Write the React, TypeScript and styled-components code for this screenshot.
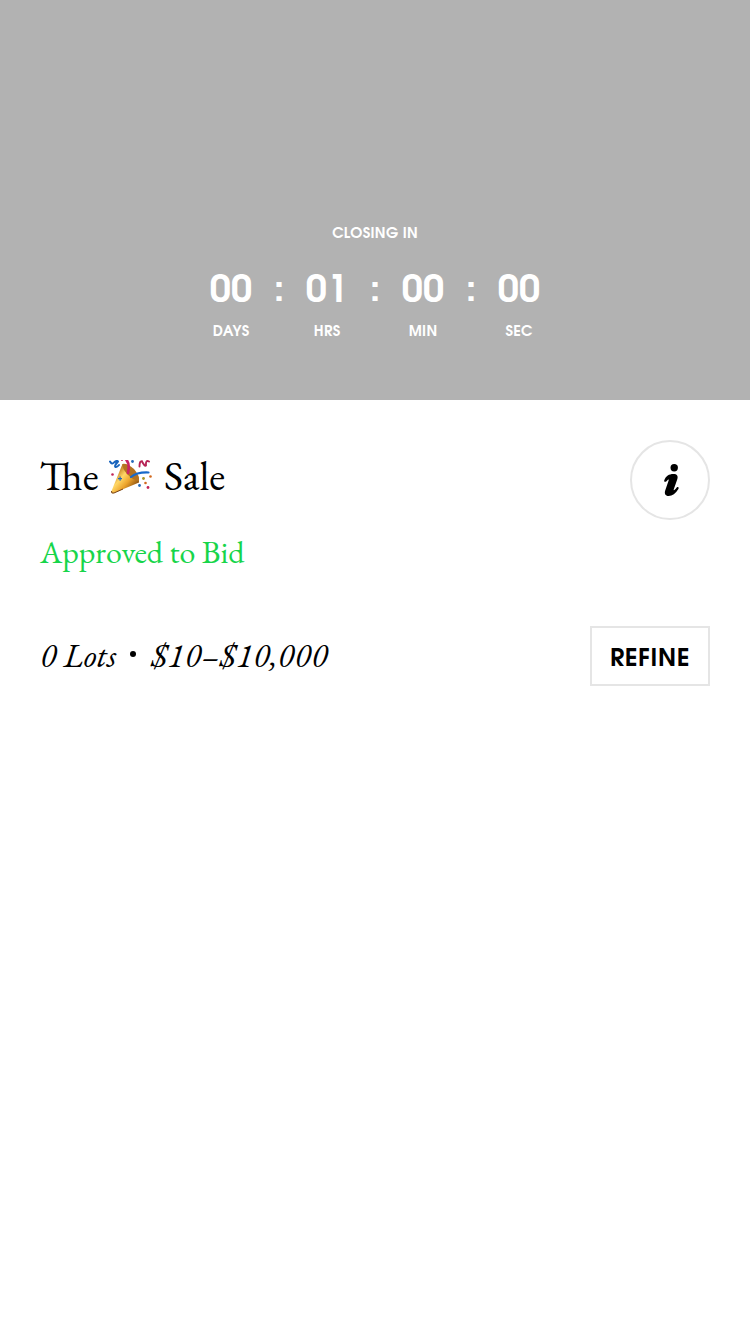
import React from "react";
import styled, { createGlobalStyle } from "styled-components";

const GlobalStyle = createGlobalStyle`
  body { margin: 0; background: #fff; }
  * { box-sizing: border-box; }
`;

const serif = `"EB Garamond", "Liberation Serif", serif`;
const sans = `"ITC Avant Garde Gothic", "URW Gothic", "TeX Gyre Adventor", Jost, "League Spartan", Lato, sans-serif`;

const Page = styled.main`
  width: 750px;
  min-height: 1334px;
  background: #fff;
  color: #000;
`;

const Hero = styled.header`
  height: 400px;
  padding-top: 224px;
  background: #b2b2b2;
  color: #fff;
  display: flex;
  flex-direction: column;
  align-items: center;
`;

const Caption = styled.div<{ $spacing?: number }>`
  font: 700 14.5px/20px ${sans};
  letter-spacing: ${(p) => p.$spacing ?? 0}px;
  margin-right: ${(p) => -(p.$spacing ?? 0)}px;
  white-space: nowrap;
`;

const Timer = styled.div`
  display: flex;
  margin-top: 25px;
`;

const Unit = styled.div`
  width: 48px;
  display: flex;
  flex-direction: column;
  align-items: center;
  gap: 7px;
`;

const Digits = styled.div`
  font: 700 38px/46px ${sans};
`;

const Colon = styled.div`
  width: 48px;
  text-align: center;
  font: 700 38px/44px ${sans};
`;

const Details = styled.section`
  padding: 40px 40px 0;
`;

const Row = styled.div`
  display: flex;
  justify-content: space-between;
`;

const Title = styled.h1`
  margin: 12px 0 0 -0.5px;
  height: 48px;
  display: flex;
  font: 400 41px/48px ${serif};
  font-variant-ligatures: common-ligatures discretionary-ligatures;
`;

const Word = styled.span<{ $width: number; $spacing?: number }>`
  width: ${(p) => p.$width}px;
  letter-spacing: ${(p) => (p.$spacing ? `${p.$spacing}px` : "normal")};
  white-space: nowrap;
`;

const Popper = styled.svg`
  width: 44px;
  height: 36px;
  margin: 8px 11px 0 0.5px;
`;

const InfoButton = styled.button`
  width: 80px;
  height: 80px;
  padding: 0;
  border: 2px solid #e5e5e5;
  border-radius: 50%;
  background: #fff;
  display: flex;
  align-items: center;
  justify-content: center;
`;

const Status = styled.p`
  margin: 13px 0 0;
  font: 400 32px/38px ${serif};
  color: #17d54a;
`;

const Summary = styled.div`
  display: flex;
  align-items: center;
  padding-bottom: 2px;
  font: italic 400 34px/58px ${serif};
`;

const Dot = styled.span`
  width: 6px;
  height: 6px;
  border-radius: 50%;
  background: #000;
  margin: 0 15px 2px 0;
`;

const FilterRow = styled(Row)`
  margin-top: 55px;
`;

const RefineButton = styled.button`
  width: 120px;
  height: 60px;
  padding: 8px 0 0;
  border: 2px solid #e5e5e5;
  background: #fff;
  color: #000;
  font: 700 24.5px/30px ${sans};
  letter-spacing: 0.6px;
`;

const units = [
  { value: "00", label: "DAYS", spacing: 0.4 },
  { value: "01", label: "HRS", spacing: 0.3 },
  { value: "00", label: "MIN", spacing: 0.3 },
  { value: "00", label: "SEC", spacing: 0.2 },
];

function PartyPopper() {
  return (
    <Popper viewBox="0 0 44 36" aria-label="Party popper">
      <defs>
        <linearGradient id="cone" x1="0.1" y1="0.3" x2="0.75" y2="0.9">
          <stop offset="0" stopColor="#b8701a" />
          <stop offset="0.35" stopColor="#ffd766" />
          <stop offset="0.65" stopColor="#eda42c" />
          <stop offset="1" stopColor="#8f5311" />
        </linearGradient>
      </defs>
      <path d="M13.500 4 L2.500 31 Q2 34 5 33 L30 22.500 Q30.500 16 25 10 Q18 3 13.500 4Z" fill="url(#cone)" />
      <path d="M13.500 4 Q13 8 18 14 Q25 21 30 21 Q31 16 25 9 Q18 3 13.500 4Z" fill="#b37322" />
      <path d="M2.500 31 Q2 34 5 33 L14 29" fill="none" stroke="#784316" strokeWidth="1" />
      <g fill="none" strokeLinecap="round" strokeLinejoin="round">
        <path d="M1 1.500 Q3 5 5 2.500 Q8 0 9 1.500 Q5 6 6.500 7 Q8 7.500 10 5" stroke="#1964bd" strokeWidth="2" />
        <path d="M17.500 0 Q21 4 19 13" stroke="#cb2464" strokeWidth="2.700" />
        <path d="M22 17 Q28 12 39.500 12.500" stroke="#1769ca" strokeWidth="2.200" />
        <path d="M30.500 6.500 Q30.500 0.500 33 1.500 Q36 7 37 5.500 Q36.500 -0.500 40 1.500" stroke="#b62254" strokeWidth="1.900" />
      </g>
      <g fill="#c32557">
        <circle cx="3.500" cy="14.500" r="1.300" />
        <circle cx="13" cy="0" r="1" />
        <circle cx="39" cy="27.500" r="1.400" />
        <circle cx="33" cy="-0.500" r="1" />
      </g>
      <g fill="#d2691e">
        <circle cx="41.500" cy="16.500" r="1.300" />
        <circle cx="36.500" cy="23" r="1.300" />
      </g>
      <circle cx="34.500" cy="18.500" r="1.400" fill="#a69425" />
      <g fill="#2569b8">
        <circle cx="23.500" cy="1.500" r="1.400" />
        <circle cx="30.500" cy="25.500" r="1.400" />
        <path d="M9 18h1.500v-1.500h1.200V18H13v1.200h-1.300v1.500h-1.200v-1.500H9z" />
      </g>
    </Popper>
  );
}

export default function App() {
  return (
    <Page>
      <GlobalStyle />
      <Hero>
        <Caption $spacing={0.3}>CLOSING IN</Caption>
        <Timer>
          {units.map((unit, i) => (
            <React.Fragment key={unit.label}>
              {i > 0 && <Colon>:</Colon>}
              <Unit>
                <Digits>{unit.value}</Digits>
                <Caption $spacing={unit.spacing}>{unit.label}</Caption>
              </Unit>
            </React.Fragment>
          ))}
        </Timer>
      </Hero>
      <Details>
        <Row>
          <Title>
            <Word $width={69}>The</Word>
            <PartyPopper />
            <Word $width={64}>Sale</Word>
          </Title>
          <InfoButton aria-label="Sale information">
            <svg width="20" height="36" viewBox="-0.700 0 20 36">
              <circle cx="13.500" cy="5.700" r="3.700" />
              <path d="M3.500 18.500 C5 14 8.500 12 12.500 12 C16.500 12 17.700 14 16.500 17.500 L13 27.500 C12.800 29 14 28 16 25.500 C17.500 24.500 18.500 25.500 17.700 27 C15 31.500 11.500 34 8 34 C4.500 34 3.500 31.500 4.500 28.500 L8 18.200 C8.200 17 7.500 17 5.500 19.500 C4.200 20.300 3.200 19.700 3.500 18.500Z" />
            </svg>
          </InfoButton>
        </Row>
        <Status>Approved to Bid</Status>
        <FilterRow>
          <Summary>
            <Word $width={90} $spacing={0.25}>0 Lots</Word>
            <Dot />
            <Word $width={180} $spacing={0.45}>$10–$10,000</Word>
          </Summary>
          <RefineButton>REFINE</RefineButton>
        </FilterRow>
      </Details>
    </Page>
  );
}
